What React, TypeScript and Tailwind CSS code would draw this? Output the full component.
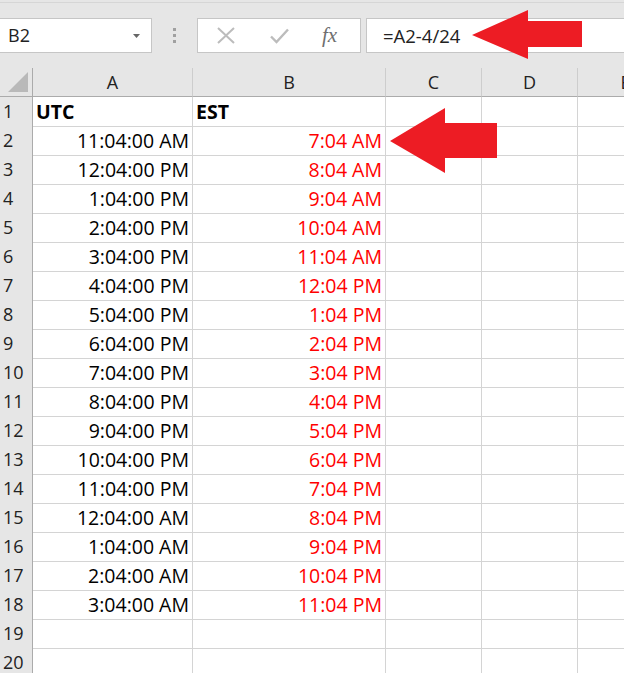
import React from "react";

// UTC -> EST sheet, Excel look: formula bar, grid, two red call-out arrows.

const UTC = [
  "11:04:00 AM",
  "12:04:00 PM",
  "1:04:00 PM",
  "2:04:00 PM",
  "3:04:00 PM",
  "4:04:00 PM",
  "5:04:00 PM",
  "6:04:00 PM",
  "7:04:00 PM",
  "8:04:00 PM",
  "9:04:00 PM",
  "10:04:00 PM",
  "11:04:00 PM",
  "12:04:00 AM",
  "1:04:00 AM",
  "2:04:00 AM",
  "3:04:00 AM",
];

const EST = [
  "7:04 AM",
  "8:04 AM",
  "9:04 AM",
  "10:04 AM",
  "11:04 AM",
  "12:04 PM",
  "1:04 PM",
  "2:04 PM",
  "3:04 PM",
  "4:04 PM",
  "5:04 PM",
  "6:04 PM",
  "7:04 PM",
  "8:04 PM",
  "9:04 PM",
  "10:04 PM",
  "11:04 PM",
];

const COLS = ["A", "B", "C", "D", "E"];
const GRID = "grid grid-cols-[33px_160px_193px_96px_96px_96px]";

function FormulaBar() {
  return (
    <div className="h-[68px] bg-[#e6e6e6]">
      <div className="h-[3px] border-b border-[#d6d6d6]" />
      <div className="mt-[15px] flex h-[35px] items-stretch">
        {/* name box */}
        <div className="flex w-[152px] shrink-0 items-center justify-between border border-l-0 border-[#c6c6c6] bg-white pl-[8px] pr-[11px] text-[18px] text-[#222]">
          <span>B2</span>
          <svg width="7" height="4" viewBox="0 0 7 4">
            <polygon points="0,0 7,0 3.5,4" fill="#666" />
          </svg>
        </div>
        <div className="flex w-[45px] shrink-0 flex-col items-center justify-center gap-[3px]">
          <div className="h-[3px] w-[3px] bg-[#a0a0a0]" />
          <div className="h-[3px] w-[3px] bg-[#a0a0a0]" />
          <div className="h-[3px] w-[3px] bg-[#a0a0a0]" />
        </div>
        {/* cancel / enter / insert function */}
        <div className="flex w-[164px] shrink-0 items-center border border-[#c6c6c6] bg-white">
          <svg className="ml-[19px]" width="18" height="17" viewBox="0 0 18 17">
            <path d="M1 1 L17 16 M17 1 L1 16" stroke="#bcbcbc" strokeWidth="2" fill="none" />
          </svg>
          <svg className="ml-[35px]" width="19" height="16" viewBox="0 0 19 16">
            <path d="M1 8.5 L6.5 14 L18 1.5" stroke="#bcbcbc" strokeWidth="2.4" fill="none" />
          </svg>
          <span className="ml-[33px] font-['Liberation_Serif',serif] text-[21px] italic text-[#6f6f6f]">
            fx
          </span>
        </div>
        <div className="ml-[5px] flex w-[280px] shrink-0 items-center border border-r-0 border-[#c6c6c6] bg-white pl-[16px] text-[18.5px] text-[#222]">
          =A2-4/24
        </div>
      </div>
    </div>
  );
}

function HeaderRow() {
  return (
    <div className={`${GRID} h-[29px] bg-[#e6e6e6] text-[18px] text-[#222]`}>
      <div className="relative border-r border-b border-[#ababab]">
        <svg className="absolute left-[8px] top-[4px]" width="20" height="20" viewBox="0 0 20 20">
          <polygon points="0,20 20,20 20,0" fill="#b9b9b9" />
        </svg>
      </div>
      {COLS.map((c) => (
        <div
          key={c}
          className="flex items-center justify-center border-r border-b border-r-[#cdcdcd] border-b-[#ababab] leading-[28px]"
        >
          {c}
        </div>
      ))}
    </div>
  );
}

function Row({ n }: { n: number }) {
  const i = n - 2;
  let a: React.ReactNode = null;
  let b: React.ReactNode = null;
  if (n === 1) {
    a = <span className="font-bold">UTC</span>;
    b = <span className="font-bold">EST</span>;
  } else if (i < UTC.length) {
    a = UTC[i];
    b = <span className="text-[#ff0000]">{EST[i]}</span>;
  }
  const left = n === 1;
  const cell = "overflow-hidden border-r border-b border-[#d4d4d4] leading-[30px] whitespace-nowrap";
  return (
    <div className={`${GRID} h-[29px] text-[19.5px] text-black`}>
      <div className="border-r border-b border-r-[#ababab] border-b-[#cfcfcf] bg-[#e6e6e6] pl-[3px] text-[18px] leading-[29px] text-[#222]">
        {n}
      </div>
      <div className={`${cell} ${left ? "pl-[3px] text-left" : "pr-[3px] text-right"}`}>{a}</div>
      <div className={`${cell} ${left ? "pl-[3px] text-left" : "pr-[3px] text-right"}`}>{b}</div>
      <div className={cell} />
      <div className={cell} />
      <div className={cell} />
    </div>
  );
}

export default function App() {
  const rows = Array.from({ length: 20 }, (_, k) => k + 1);
  return (
    <div className="relative h-[673px] w-[624px] overflow-hidden bg-white font-['Open_Sans',sans-serif]">
      <FormulaBar />
      <HeaderRow />
      {rows.map((n) => (
        <Row key={n} n={n} />
      ))}

      {/* call-out arrows drawn over the sheet */}
      <svg className="pointer-events-none absolute left-0 top-0" width="624" height="673" viewBox="0 0 624 673">
        <polygon points="472,35 528,10 528,21 582,21 582,47 528,47 528,59" fill="#ed1c24" />
        <polygon points="390,141 445,108 445,123 497,123 497,158 445,158 445,173" fill="#ed1c24" />
      </svg>
    </div>
  );
}
